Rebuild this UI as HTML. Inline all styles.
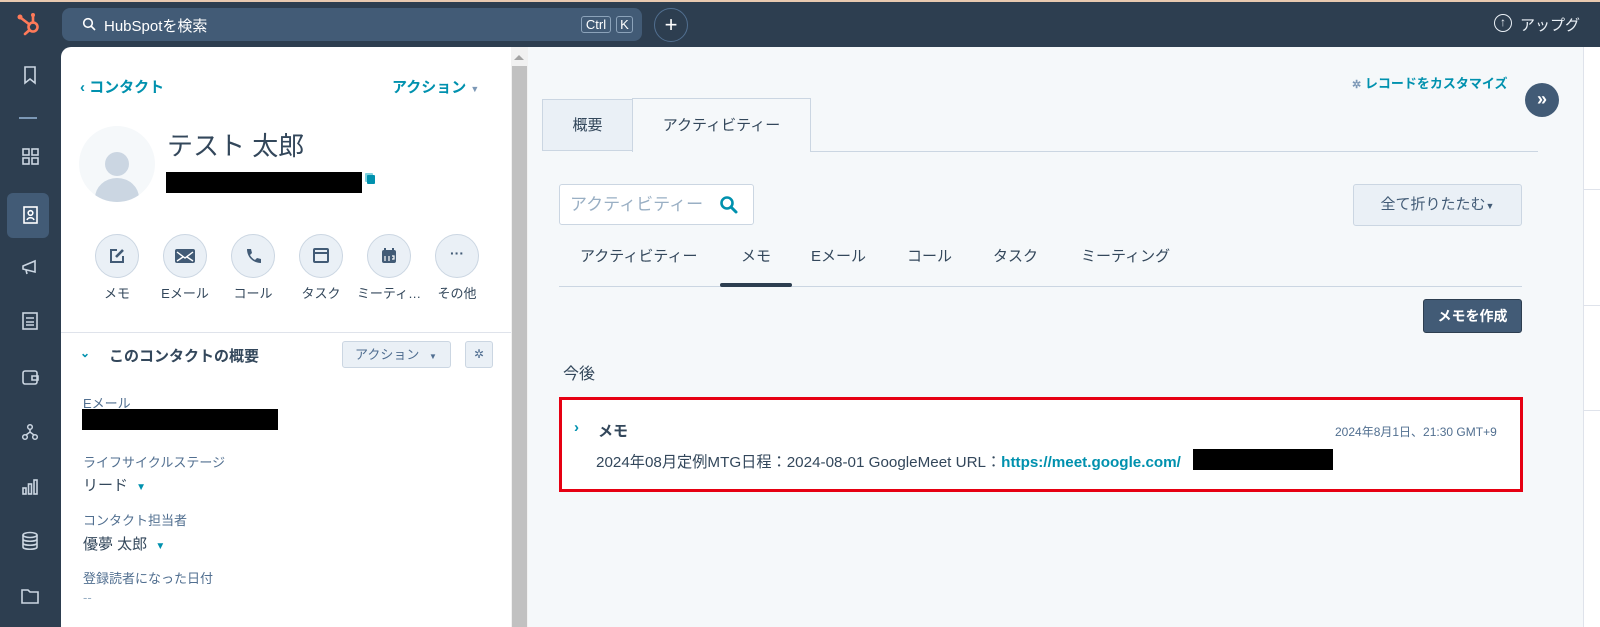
<!DOCTYPE html>
<html><head><meta charset="utf-8"><style>
*{box-sizing:border-box;margin:0;padding:0}
body{width:1600px;height:627px;overflow:hidden;background:#2d3e50;font-family:"Liberation Sans","Noto Sans CJK JP",sans-serif;position:relative;color:#33475b}
.a{position:absolute}
.teal{color:#0091ae}
.circ{position:absolute;width:44px;height:44px;border-radius:50%;background:#eaf0f6;border:1px solid #cbd6e2;display:flex;align-items:center;justify-content:center}
.lab{position:absolute;font-size:13px;width:80px;text-align:center;color:#33475b}
.sb{position:absolute;left:19px;width:22px;height:22px}
</style></head><body>
<div class="a" style="left:0;top:0;width:1600px;height:2px;background:#e8c9b0"></div>
<svg class="a" style="left:15px;top:10px" width="28" height="28" viewBox="0 0 28 28"><g stroke="#ff7a59" stroke-width="2.6" fill="none" stroke-linecap="round"><circle cx="18" cy="17" r="4.5"/><line x1="18" y1="12.5" x2="18" y2="6"/><line x1="14.5" y1="14.5" x2="6" y2="8"/><line x1="14.5" y1="20" x2="10" y2="24"/></g><circle cx="5" cy="7" r="2.5" fill="#ff7a59"/><circle cx="18" cy="5" r="2" fill="#ff7a59"/></svg>
<div class="a" style="left:62px;top:8px;width:580px;height:33px;background:#425b76;border-radius:8px"></div>
<svg class="a" style="left:82px;top:17px" width="14" height="14" viewBox="0 0 14 14"><circle cx="6" cy="6" r="4.3" stroke="#fff" stroke-width="1.6" fill="none"/><line x1="9" y1="9" x2="13" y2="13" stroke="#fff" stroke-width="1.6"/></svg>
<div class="a" style="left:104px;top:15px;font-size:15px;color:#fff">HubSpotを検索</div>
<div class="a" style="left:581px;top:16px;width:30px;height:17px;border:1px solid #8ca3ba;border-radius:3px;color:#fff;font-size:13px;text-align:center;line-height:15px">Ctrl</div>
<div class="a" style="left:616px;top:16px;width:17px;height:17px;border:1px solid #8ca3ba;border-radius:3px;color:#fff;font-size:13px;text-align:center;line-height:15px">K</div>
<div class="a" style="left:654px;top:8px;width:34px;height:34px;border-radius:50%;border:1px solid #516f90;color:#fff;font-size:22px;text-align:center;line-height:31px">+</div>
<div class="a" style="left:1494px;top:14px;width:18px;height:18px;border-radius:50%;border:1.5px solid #eaf0f6;color:#eaf0f6;font-size:12px;text-align:center;line-height:15px">↑</div>
<div class="a" style="left:1520px;top:14px;font-size:15px;color:#eaf0f6;white-space:nowrap">アップグ</div>
<svg class="sb" style="top:64px" viewBox="0 0 22 22" fill="none" stroke="#cbd6e2" stroke-width="1.6"><path d="M6 3h10v16l-5-4-5 4z"/></svg>
<div class="a" style="left:19px;top:117px;width:18px;height:2px;background:#7c98b6"></div>
<svg class="sb" style="top:145px" viewBox="0 0 22 22" fill="none" stroke="#cbd6e2" stroke-width="1.6"><rect x="4" y="4" width="6" height="6"/><rect x="13" y="4" width="6" height="6"/><rect x="4" y="13" width="6" height="6"/><rect x="13" y="13" width="6" height="6"/></svg>
<div class="a" style="left:7px;top:193px;width:42px;height:45px;background:#425b76;border-radius:6px"></div>
<svg class="sb" style="top:204px" viewBox="0 0 22 22" fill="none" stroke="#fff" stroke-width="1.6"><rect x="5" y="3" width="13" height="16"/><circle cx="11.5" cy="9" r="2.3"/><path d="M8 16c1-3 6-3 7 0"/></svg>
<svg class="sb" style="top:256px" viewBox="0 0 22 22" fill="none" stroke="#cbd6e2" stroke-width="1.6"><path d="M4 10l12-5v11L4 13z M7 14l1 4"/></svg>
<svg class="sb" style="top:310px" viewBox="0 0 22 22" fill="none" stroke="#cbd6e2" stroke-width="1.6"><rect x="4" y="3" width="14" height="16"/><path d="M7 8h8M7 12h8M7 15h8"/></svg>
<svg class="sb" style="top:366px" viewBox="0 0 22 22" fill="none" stroke="#cbd6e2" stroke-width="1.6"><rect x="4" y="5" width="14" height="13" rx="2"/><path d="M13 10h6v4h-6z"/></svg>
<svg class="sb" style="top:421px" viewBox="0 0 22 22" fill="none" stroke="#cbd6e2" stroke-width="1.5"><circle cx="11" cy="6" r="2.3"/><circle cx="6" cy="16" r="2.3"/><circle cx="16" cy="16" r="2.3"/><path d="M11 8v3M7 14l4-3 4 3"/></svg>
<svg class="sb" style="top:476px" viewBox="0 0 22 22" fill="none" stroke="#cbd6e2" stroke-width="1.6"><rect x="4" y="12" width="3" height="6"/><rect x="9.5" y="8" width="3" height="10"/><rect x="15" y="4" width="3" height="14"/></svg>
<svg class="sb" style="top:530px" viewBox="0 0 22 22" fill="none" stroke="#cbd6e2" stroke-width="1.6"><ellipse cx="11" cy="5" rx="7" ry="2.5"/><path d="M4 5v12c0 3 14 3 14 0V5M4 9c0 3 14 3 14 0M4 13c0 3 14 3 14 0"/></svg>
<svg class="sb" style="top:585px" viewBox="0 0 22 22" fill="none" stroke="#cbd6e2" stroke-width="1.6"><path d="M3 5h6l2 2h8v11H3z"/></svg>
<div class="a" style="left:61px;top:47px;width:450px;height:580px;background:#fff;border-top-left-radius:10px"></div>
<div class="a" style="left:511px;top:47px;width:17px;height:580px;background:#f1f1f1"></div>
<div class="a" style="left:512px;top:66px;width:15px;height:561px;background:#c1c1c1"></div>
<div class="a" style="left:514px;top:55px;width:0;height:0;border-left:5px solid transparent;border-right:5px solid transparent;border-bottom:5px solid #a3a3a3"></div>
<div class="a teal" style="left:80px;top:76px;font-size:15px;font-weight:bold">‹ コンタクト</div>
<div class="a teal" style="left:392px;top:76px;font-size:15px;font-weight:bold">アクション <span style="font-size:9px;color:#7c98b6">▼</span></div>
<div class="a" style="left:79px;top:126px;width:76px;height:76px;border-radius:50%;background:#f5f8fa;overflow:hidden">
 <div class="a" style="left:26px;top:26px;width:24px;height:24px;border-radius:50%;background:#cbd6e2"></div>
 <div class="a" style="left:16px;top:52px;width:44px;height:40px;border-radius:50%;background:#cbd6e2"></div>
</div>
<div class="a" style="left:167px;top:126px;font-size:26px;color:#33475b">テスト 太郎</div>
<div class="a" style="left:166px;top:172px;width:196px;height:21px;background:#000"></div>
<div class="a" style="left:367px;top:175px;width:8px;height:9px;background:#0091ae;border-radius:1px;box-shadow:-2px -2px 0 #7fd1de"></div>
<div class="circ" style="left:95px;top:234px"><svg width="18" height="18" viewBox="0 0 18 18" fill="none" stroke="#425b76" stroke-width="2"><path d="M9 3H3v12h12V9"/><path d="M8 10l7-7" stroke-width="2.6"/></svg></div>
<div class="circ" style="left:163px;top:234px"><svg width="20" height="14" viewBox="0 0 20 14"><rect width="20" height="14" rx="2" fill="#425b76"/><path d="M2 3l8 6 8-6M2 12l6-4M18 12l-6-4" stroke="#fff" stroke-width="1.4" fill="none"/></svg></div>
<div class="circ" style="left:231px;top:234px"><svg width="18" height="18" viewBox="0 0 18 18"><path d="M3 2l4 0 1 4-2 2c1 2 3 4 5 5l2-2 4 1v4c-8 0-14-6-14-14z" fill="#425b76"/></svg></div>
<div class="circ" style="left:299px;top:234px"><svg width="18" height="18" viewBox="0 0 18 18" fill="none" stroke="#425b76" stroke-width="2"><rect x="2" y="2" width="14" height="13" rx="1"/><path d="M2 6h14"/></svg></div>
<div class="circ" style="left:367px;top:234px"><svg width="18" height="18" viewBox="0 0 18 18"><rect x="2" y="3" width="14" height="13" rx="2" fill="#425b76"/><path d="M5 1v4M13 1v4" stroke="#425b76" stroke-width="2"/><path d="M5 9v5M9 9v5M12 9h2v3h-2" stroke="#fff" stroke-width="1.2" fill="none"/></svg></div>
<div class="circ" style="left:435px;top:234px;color:#425b76;font-size:14px;font-weight:bold;line-height:10px;padding-bottom:6px">···</div>
<div class="lab" style="left:77px;top:283px">メモ</div>
<div class="lab" style="left:145px;top:283px">Eメール</div>
<div class="lab" style="left:213px;top:283px">コール</div>
<div class="lab" style="left:281px;top:283px">タスク</div>
<div class="lab" style="left:349px;top:283px">ミーティ…</div>
<div class="lab" style="left:417px;top:283px">その他</div>
<div class="a" style="left:61px;top:332px;width:450px;height:1px;background:#dfe3eb"></div>
<div class="a teal" style="left:80px;top:346px;font-size:12px;font-weight:bold">⌄</div>
<div class="a" style="left:109px;top:345px;font-size:15px;font-weight:bold;color:#33475b">このコンタクトの概要</div>
<div class="a" style="left:342px;top:341px;width:109px;height:27px;background:#eaf0f6;border:1px solid #cbd6e2;border-radius:3px;font-size:13px;color:#506e91;line-height:25px;padding-left:12px">アクション <span style="font-size:8px;margin-left:6px">▼</span></div>
<div class="a" style="left:465px;top:341px;width:28px;height:27px;background:#eaf0f6;border:1px solid #cbd6e2;border-radius:3px;font-size:12px;color:#506e91;text-align:center;line-height:25px">✲</div>
<div class="a" style="left:83px;top:393px;font-size:13px;color:#516f90">Eメール</div>
<div class="a" style="left:82px;top:409px;width:196px;height:21px;background:#000"></div>
<div class="a" style="left:83px;top:452px;font-size:13px;color:#516f90">ライフサイクルステージ</div>
<div class="a" style="left:83px;top:474px;font-size:15px;color:#33475b">リード <span class="teal" style="font-size:10px;margin-left:4px">▼</span></div>
<div class="a" style="left:83px;top:510px;font-size:13px;color:#516f90">コンタクト担当者</div>
<div class="a" style="left:83px;top:533px;font-size:15px;color:#33475b">優夢 太郎 <span class="teal" style="font-size:10px;margin-left:4px">▼</span></div>
<div class="a" style="left:83px;top:568px;font-size:13px;color:#516f90">登録読者になった日付</div>
<div class="a" style="left:83px;top:590px;font-size:13px;color:#99afc4">--</div>
<div class="a" style="left:528px;top:47px;width:1055px;height:580px;background:#f5f8fa"></div>
<div class="a" style="left:1583px;top:47px;width:17px;height:580px;background:#fff;border-left:1px solid #dfe3eb"></div>
<div class="a" style="left:1584px;top:189px;width:16px;height:1px;background:#dfe3eb"></div>
<div class="a" style="left:1584px;top:305px;width:16px;height:1px;background:#dfe3eb"></div>
<div class="a" style="left:1584px;top:410px;width:16px;height:1px;background:#dfe3eb"></div>
<div class="a teal" style="left:1352px;top:73px;font-size:13px;font-weight:bold"><span style="color:#7c98b6;font-size:11px">✲</span> レコードをカスタマイズ</div>
<div class="a" style="left:1525px;top:83px;width:34px;height:34px;border-radius:50%;background:#425b76;color:#fff;font-size:18px;font-weight:bold;text-align:center;line-height:32px">»</div>
<div class="a" style="left:542px;top:99px;width:91px;height:52px;background:#eaf0f6;border:1px solid #cbd6e2;font-size:15px;text-align:center;line-height:52px">概要</div>
<div class="a" style="left:632px;top:98px;width:179px;height:54px;background:#f5f8fa;border:1px solid #cbd6e2;border-bottom:none;font-size:15px;text-align:center;line-height:54px">アクティビティー</div>
<div class="a" style="left:810px;top:151px;width:728px;height:1px;background:#cbd6e2"></div>
<div class="a" style="left:559px;top:184px;width:195px;height:41px;background:#fff;border:1px solid #cbd6e2;border-radius:3px;font-size:17px;color:#99afc4;line-height:39px;padding-left:10px">アクティビティー</div>
<svg class="a" style="left:719px;top:195px" width="20" height="20" viewBox="0 0 20 20"><circle cx="8" cy="8" r="5.5" stroke="#0091ae" stroke-width="2.6" fill="none"/><line x1="12" y1="12" x2="17" y2="17" stroke="#0091ae" stroke-width="3" stroke-linecap="round"/></svg>
<div class="a" style="left:1353px;top:184px;width:169px;height:42px;background:#eaf0f6;border:1px solid #cbd6e2;border-radius:3px;font-size:15px;color:#425b76;text-align:center;line-height:40px">全て折りたたむ<span style="font-size:9px">▼</span></div>
<div class="a" style="left:580px;top:245px;font-size:15px;color:#33475b;white-space:nowrap">アクティビティー</div>
<div class="a" style="left:741px;top:245px;font-size:15px">メモ</div>
<div class="a" style="left:811px;top:245px;font-size:15px">Eメール</div>
<div class="a" style="left:907px;top:245px;font-size:15px">コール</div>
<div class="a" style="left:993px;top:245px;font-size:15px">タスク</div>
<div class="a" style="left:1081px;top:245px;font-size:15px;white-space:nowrap">ミーティング</div>
<div class="a" style="left:559px;top:286px;width:963px;height:1px;background:#cbd6e2"></div>
<div class="a" style="left:720px;top:283px;width:72px;height:4px;background:#2d3e50;border-radius:2px"></div>
<div class="a" style="left:1423px;top:299px;width:99px;height:34px;background:#425b76;border:1px solid #2d3e50;border-radius:3px;color:#fff;font-size:14px;text-align:center;line-height:32px;font-weight:bold">メモを作成</div>
<div class="a" style="left:563px;top:360px;font-size:16px;color:#33475b">今後</div>
<div class="a" style="left:559px;top:397px;width:964px;height:95px;background:#fff;border:3px solid #e60012"></div>
<div class="a teal" style="left:574px;top:419px;font-size:15px;font-weight:bold">›</div>
<div class="a" style="left:598px;top:420px;font-size:15px;font-weight:bold;color:#33475b">メモ</div>
<div class="a" style="left:1335px;top:423px;font-size:12px;color:#516f90">2024年8月1日、21:30 GMT+9</div>
<div class="a" style="left:596px;top:450px;font-size:15.2px;color:#33475b;white-space:nowrap">2024年08月定例MTG日程：2024-08-01 GoogleMeet URL：<b class="teal">https://meet.google.com/</b></div>
<div class="a" style="left:1193px;top:449px;width:140px;height:21px;background:#000"></div>
</body></html>
